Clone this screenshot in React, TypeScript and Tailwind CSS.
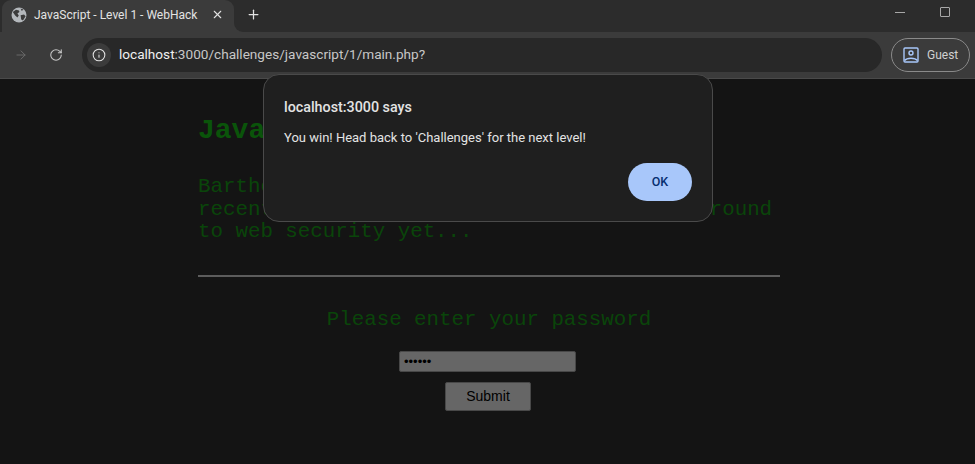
import { Plus, X, ArrowRight, RotateCw, Info } from "lucide-react";

function GlobeIcon() {
  return (
    <svg width="16" height="16" viewBox="0 0 16 16" className="shrink-0">
      <circle cx="8" cy="8" r="7.5" fill="#b4b8bc" />
      <path
        d="M1.8 5 L5 2.8 L8 3.4 L8.4 5 L6.4 6.6 L7.8 8.6 L6.4 10.6 L4.2 8.6 Z M9.6 8.2 L13 7.6 L14.6 9.2 L12 13.4 L10.2 12.6 Z M9.6 1.4 L12.4 2.6 L10.8 4 Z"
        fill="#3b3b3b"
      />
    </svg>
  );
}

function GuestIcon() {
  return (
    <svg width="16" height="16" viewBox="0 0 16 16" fill="none" stroke="#a8c7fa" strokeWidth="1.4" className="shrink-0">
      <rect x="1" y="1" width="14" height="14" rx="1" />
      <circle cx="8" cy="6" r="2" />
      <path d="M1.5 13.5 C4 10.5 12 10.5 14.5 13.5" />
    </svg>
  );
}

function BrowserBar() {
  return (
    <header className="bg-[#3b3b3b] border-b border-[#4a4a4a] font-['Roboto',sans-serif]">
      <div className="h-[32px] flex items-stretch">
        <div className="bg-[#2c2c2c] pl-[2px]">
          <div className="w-[232px] h-full bg-[#3b3b3b] rounded-t-[9px] flex items-center pl-[9px] pr-[10px] pb-[3px]">
            <GlobeIcon />
            <span className="ml-[7px] text-[12px] text-[#e3e3e3] flex-1 whitespace-nowrap">JavaScript - Level 1 - WebHack</span>
            <X size={13} strokeWidth={2} className="text-[#e3e3e3]" />
          </div>
        </div>
        <div className="flex-1 bg-[#2c2c2c] rounded-bl-[9px] flex items-center pl-[12px] pb-[3px]">
          <Plus size={15} strokeWidth={2} className="text-[#e3e3e3]" />
          <div className="ml-auto flex items-center pb-[5px] pr-[25px] gap-[35px]">
            <div className="w-[10px] h-px bg-[#a8a8a8]" />
            <div className="w-[10px] h-[10px] border border-[#a8a8a8] rounded-[1px]" />
          </div>
        </div>
      </div>
      <div className="h-[46px] flex items-center pl-[14px] pr-[5px] pb-[1px]">
        <ArrowRight size={14} strokeWidth={1.6} className="text-[#6d6d6d]" />
        <RotateCw size={14} strokeWidth={1.8} className="ml-[21px] text-[#c8c8c8]" />
        <div className="ml-[19px] h-[34px] w-[800px] bg-[#282828] rounded-full flex items-center pl-[5px]">
          <div className="w-[24px] h-[24px] rounded-full bg-[#3b3b3b] flex items-center justify-center">
            <Info size={14} strokeWidth={1.8} className="text-[#e3e3e3]" />
          </div>
          <span className="ml-[8px] text-[13.6px] text-[#c7c7c7] whitespace-nowrap">
            <span className="text-[#f0f0f0]">localhost</span>:3000/challenges/javascript/1/main.php?
          </span>
        </div>
        <div className="ml-[9px] h-[34px] w-[79px] rounded-full border border-[#8a8a8a] flex items-center pl-[11px]">
          <GuestIcon />
          <span className="ml-[8px] text-[12px] text-[#d0d0d0]">Guest</span>
        </div>
      </div>
    </header>
  );
}

function AlertDialog() {
  return (
    <div className="absolute left-[263px] top-[74px] w-[450px] h-[148px] rounded-[16px] bg-[#1f1f1f] border border-[#4a4a4a] px-[20px] pt-[20px] font-['Roboto',sans-serif]">
      <h2 className="text-[14.3px] leading-[24px] font-medium text-[#e3e3e3]">localhost:3000 says</h2>
      <p className="mt-[9px] text-[13px] leading-[20px] text-[#e3e3e3]">
        You win! Head back to 'Challenges' for the next level!
      </p>
      <div className="flex justify-end mt-[15px]">
        <button className="w-[64px] h-[38px] rounded-full bg-[#a8c7fa] text-[12.5px] font-medium text-[#062e6f]">
          OK
        </button>
      </div>
    </div>
  );
}

export default function App() {
  return (
    <div className="relative h-[464px] w-[975px] overflow-hidden bg-[#141414]">
      <BrowserBar />
      <main className="w-[582px] ml-[198px] pt-[35px] font-['Liberation_Mono',monospace] text-[#0a450a]">
        <h1 className="text-[28px] leading-[34px] font-bold text-[#0a540a]">JavaScript - Level 1</h1>
        <p className="mt-[28px] text-[20.8px] leading-[22.5px] whitespace-pre">
          {"Bartholomew is a budding developer who\nrecently learnt some PHP, but hasn't got round\nto web security yet..."}
        </p>
        <hr className="mt-[31px] border-t-2 border-[#5c5c5c]" />
        <p className="mt-[29px] text-[20.8px] leading-[27px] text-center">Please enter your password</p>
        <div className="mt-[18px] flex flex-col items-center">
          <input
            type="password"
            defaultValue="secret"
            readOnly
            className="mr-[3px] w-[177px] h-[21px] bg-[#666666] border border-[#484848] rounded-[2px] px-[4px] text-[13px] text-black font-['Liberation_Sans',sans-serif]"
          />
          <button className="mt-[10px] mr-[2px] w-[86px] h-[29px] bg-[#666666] border border-[#484848] rounded-[2px] text-[14px] text-black font-['Liberation_Sans',sans-serif]">
            Submit
          </button>
        </div>
      </main>
      <AlertDialog />
    </div>
  );
}
